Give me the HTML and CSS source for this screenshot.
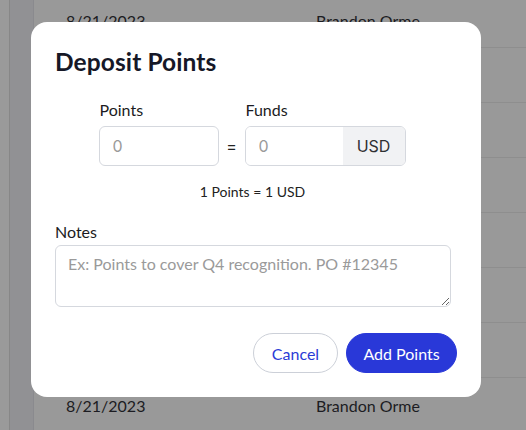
FILE: index.html
```html
<!DOCTYPE html>
<html lang="en">
<head>
<meta charset="utf-8">
<title>Deposit Points</title>
<link rel="stylesheet" href="styles.css">
</head>
<body>
<div class="page">
  <div class="rail"></div>
  <div class="nav"></div>
  <div class="main">
    <div class="row"><span class="date">8/21/2023</span><span class="name">Brandon Orme</span></div>
    <div class="row"></div>
    <div class="row"></div>
    <div class="row"></div>
    <div class="row"></div>
    <div class="row"></div>
    <div class="row"></div>
    <div class="row"><span class="date">8/21/2023</span><span class="name">Brandon Orme</span></div>
  </div>
</div>
<div class="overlay"></div>
<div class="modal">
  <h1 class="title">Deposit Points</h1>
  <div class="convert">
    <div class="field">
      <label class="label">Points</label>
      <input class="input points" type="text" placeholder="0">
    </div>
    <div class="equals">=</div>
    <div class="field">
      <label class="label">Funds</label>
      <div class="group">
        <input class="input funds" type="text" placeholder="0">
        <span class="addon">USD</span>
      </div>
    </div>
  </div>
  <p class="rate">1 Points = 1 USD</p>
  <label class="label notes-label">Notes</label>
  <textarea class="notes" placeholder="Ex: Points to cover Q4 recognition. PO #12345"></textarea>
  <div class="actions">
    <button class="btn cancel">Cancel</button>
    <button class="btn primary">Add Points</button>
  </div>
</div>
</body>
</html>
```
FILE: styles.css
```css
* { box-sizing: border-box; }
html, body { margin: 0; padding: 0; }
body {
  width: 526px;
  height: 430px;
  overflow: hidden;
  font-family: "Lato", "Noto Sans", sans-serif;
  background: #999999;
  position: relative;
}
.page {
  display: flex;
  height: 430px;
}
.rail {
  width: 10px;
  background: #9a9a9a;
  border-right: 1px solid #878787;
}
.nav {
  width: 24px;
  background: #919194;
  border-right: 1px solid #8a8a8e;
}
.main {
  flex: 1;
  margin-top: -7px;
  background: #999999;
}
.row {
  height: 55px;
  border-bottom: 1px solid #8e8e8e;
  display: flex;
  align-items: center;
  padding-left: 32px;
  font-size: 16px;
  color: #1c1c22;
}
.date { width: 250px; }
.overlay {
  position: absolute;
  inset: 0;
  background: transparent;
}
.modal {
  position: absolute;
  left: 31px;
  top: 22px;
  width: 450px;
  height: 375px;
  background: #ffffff;
  border-radius: 16px;
  padding: 24px;
  display: flex;
  flex-direction: column;
}
.title {
  margin: 0;
  font-size: 24.5px;
  line-height: 32px;
  font-weight: 700;
  color: #161827;
  letter-spacing: 0.1px;
}
.convert {
  display: flex;
  justify-content: center;
  align-items: flex-end;
  margin-top: 22px;
  padding-right: 8px;
}
.field {
  display: flex;
  flex-direction: column;
  gap: 6px;
}
.label {
  font-size: 16px;
  line-height: 20px;
  color: #1b1b22;
  padding-left: 1px;
}
.input {
  height: 40px;
  border: 1px solid #d5d8de;
  border-radius: 6px;
  padding: 0 13px;
  font-family: "Inter", "Roboto", sans-serif;
  font-size: 16px;
  color: #333;
  outline: none;
  background: #fff;
}
.input::placeholder { color: #9a9a9a; }
.points { width: 120px; }
.equals {
  width: 26px;
  height: 40px;
  display: flex;
  align-items: center;
  justify-content: center;
  font-family: "Inter", sans-serif;
  font-size: 16px;
  color: #222;
}
.group {
  display: flex;
  width: 161px;
  height: 40px;
  border: 1px solid #d5d8de;
  border-radius: 6px;
  overflow: hidden;
}
.funds {
  width: 97px;
  height: 38px;
  border: none;
  border-radius: 0;
}
.addon {
  flex: 1;
  background: #f1f2f4;
  display: flex;
  align-items: center;
  justify-content: center;
  font-family: "Inter", "Roboto", sans-serif;
  font-size: 16px;
  color: #2f3033;
}
.rate {
  margin: 16px 0 0;
  text-align: center;
  padding-right: 7px;
  font-size: 14px;
  line-height: 20px;
  color: #222;
}
.notes-label {
  margin-top: 20px;
  padding-left: 0;
}
.notes {
  margin-top: 3px;
  width: 396px;
  height: 62px;
  border: 1px solid #d5d8de;
  border-radius: 6px;
  padding: 7px 12px;
  font-family: "Lato", sans-serif;
  font-size: 16px;
  line-height: 22px;
  resize: vertical;
  outline: none;
}
.notes::placeholder { color: #9a9a9a; }
.actions {
  margin-top: auto;
  display: flex;
  justify-content: flex-end;
  gap: 8px;
}
.btn {
  height: 40px;
  border-radius: 20px;
  font-family: "Lato", sans-serif;
  font-size: 16px;
  cursor: pointer;
}
.cancel {
  width: 85px;
  background: #fff;
  border: 1px solid #ccd0d8;
  color: #2a3bd6;
}
.primary {
  width: 111px;
  background: #2938d8;
  border: 1px solid #2938d8;
  color: #fff;
}
```
